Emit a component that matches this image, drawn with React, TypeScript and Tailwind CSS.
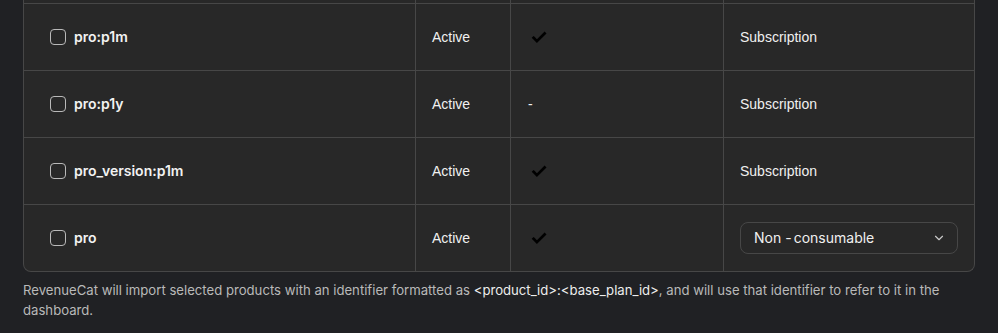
import { ChevronDown } from "lucide-react";

type Product = {
  id: string;
  status: string;
  backend: boolean;
  type: string;
  select?: boolean;
};

const products: Product[] = [
  { id: "pro:p1m", status: "Active", backend: true, type: "Subscription" },
  { id: "pro:p1y", status: "Active", backend: false, type: "Subscription" },
  { id: "pro_version:p1m", status: "Active", backend: true, type: "Subscription" },
  { id: "pro", status: "Active", backend: true, type: "Non-consumable", select: true },
];

function CheckMark() {
  return (
    <svg width="20" height="20" viewBox="0 0 20 20" aria-hidden>
      <path
        d="M6.6 10.8 L9.9 14.1 L17.6 6.4"
        fill="none"
        stroke="#000"
        strokeWidth="2.7"
        strokeLinecap="square"
      />
    </svg>
  );
}

export default function App() {
  return (
    <div className="min-h-[333px] bg-[#202124] px-[23px] font-['Inter',sans-serif]">
      <div className="overflow-hidden rounded-b-lg border-x border-b border-[#474747] bg-[#282828]">
        <div className="grid h-[3px] grid-cols-[391px_95px_213px_251px]">
          <div />
          <div className="border-l border-[#474747]" />
          <div className="border-l border-[#474747]" />
          <div className="border-l border-[#474747]" />
        </div>
        {products.map((p) => (
          <div
            key={p.id}
            className="grid h-[67px] grid-cols-[391px_95px_213px_251px] border-t border-[#474747]"
          >
            <div className="flex items-center gap-2 pl-[26px]">
              <span className="h-4 w-4 rounded-[4px] border-[1.5px] border-[#b9b9b9]" />
              <span className="text-sm font-semibold text-[#f2f2f2]">{p.id}</span>
            </div>
            <div className="flex items-center border-l border-[#474747] pl-4 font-['Liberation_Sans',sans-serif] text-sm text-[#f0f0f0]">
              {p.status}
            </div>
            <div className="flex items-center border-l border-[#474747] pl-4">
              {p.backend ? (
                <CheckMark />
              ) : (
                <span className="pl-[1px] font-['Liberation_Sans',sans-serif] text-sm text-[#f0f0f0]">-</span>
              )}
            </div>
            <div className="flex items-center border-l border-[#474747] px-4 font-['Liberation_Sans',sans-serif] text-sm text-[#f0f0f0]">
              {p.select ? (
                <div className="flex h-8 w-full items-center justify-between rounded-lg border border-[#474747] pl-[13px] pr-[11px] font-['Inter',sans-serif] text-[#f0f0f0]">
                  <span>
                    Non<span className="ml-[4px] mr-[2px]">-</span>consumable
                  </span>
                  <ChevronDown className="h-3.5 w-3.5 text-[#c8c8c8]" strokeWidth={2} />
                </div>
              ) : (
                p.type
              )}
            </div>
          </div>
        ))}
      </div>
      <p className="mt-2 text-[13.15px] leading-5 text-[#b9b9b9]">
        RevenueCat will import selected products with an identifier formatted as{" "}
        <span className="text-[#ededed]">&lt;product_id&gt;:&lt;base_plan_id&gt;</span>, and will use
        that identifier to refer to it in the dashboard.
      </p>
    </div>
  );
}
